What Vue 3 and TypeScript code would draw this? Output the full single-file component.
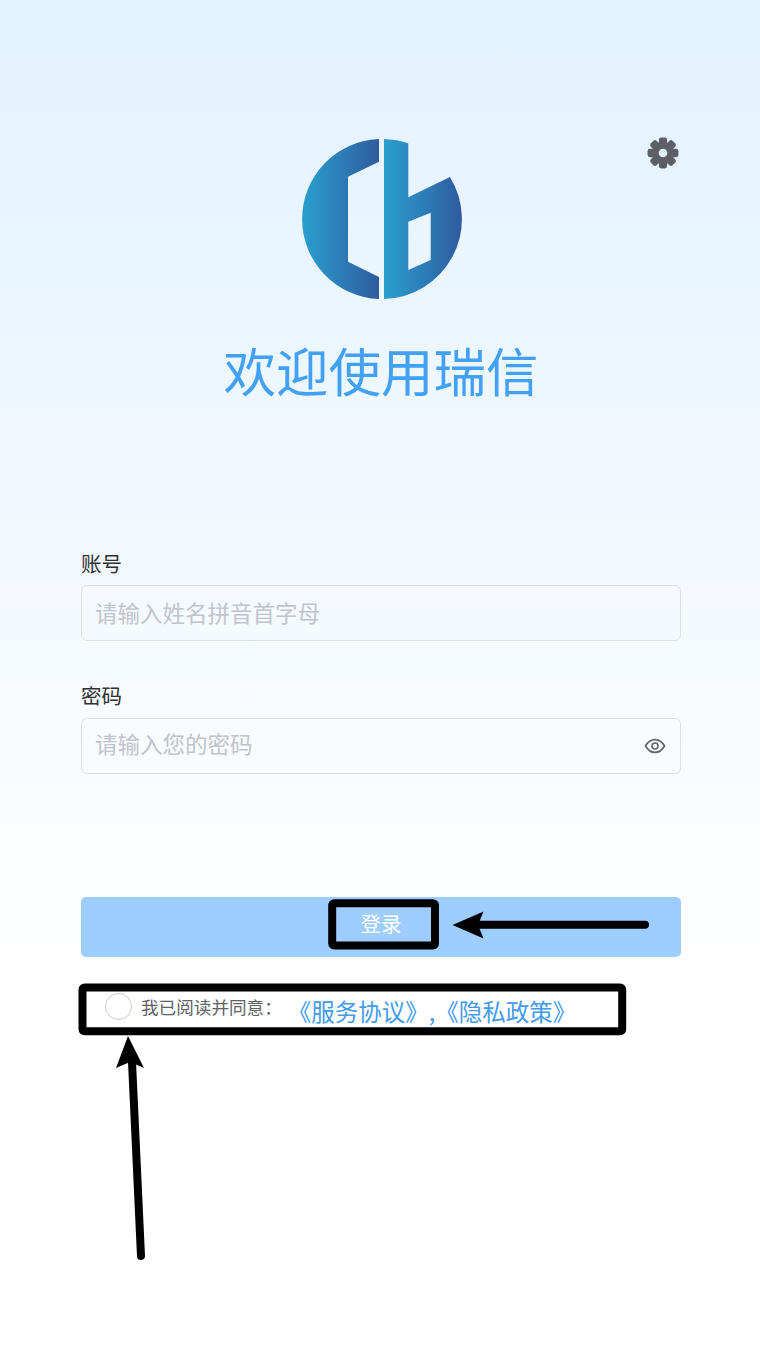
<script setup lang="ts">
const teeth: number[] = [0, 45, 90, 135, 180, 225, 270, 315]
</script>

<template>
  <div class="page">
    <header class="hero">
      <svg class="gear" viewBox="0 0 34 34" aria-label="设置">
        <g fill="#5c5f66">
          <rect v-for="t in teeth" :key="t" x="12.6" y="0.6" width="8.8" height="10" rx="2.6" :transform="`rotate(${t} 17 17)`" />
          <path fill-rule="evenodd" d="M17 5.5a11.5 11.5 0 1 0 0 23a11.5 11.5 0 1 0 0-23ZM17 12.4a4.6 4.6 0 1 1 0 9.2a4.6 4.6 0 1 1 0-9.2Z" />
        </g>
      </svg>
      <svg class="logo" viewBox="0 0 160 160" aria-label="logo">
        <defs>
          <linearGradient id="lg-l" gradientUnits="userSpaceOnUse" x1="0" y1="0" x2="77" y2="0">
            <stop offset="0" stop-color="#2a9fd0" />
            <stop offset="1" stop-color="#2f5b9f" />
          </linearGradient>
          <linearGradient id="lg-r" gradientUnits="userSpaceOnUse" x1="82" y1="0" x2="160" y2="0">
            <stop offset="0" stop-color="#2a9fd0" />
            <stop offset="1" stop-color="#2f5b9f" />
          </linearGradient>
        </defs>
        <path fill="url(#lg-l)" d="M77 0.06A80 80 0 0 0 77 159.94L77 138L46 122.7L46 37.7L77 22.7Z" />
        <path fill="url(#lg-r)" fill-rule="evenodd" d="M82 0.03A80 80 0 0 1 106.3 4.45L106.3 58.3L148 38A80 80 0 0 1 82 159.97ZM106.3 82.7L128.7 73.7L128.7 121L106.3 131Z" />
      </svg>
      <h1 class="title">欢迎使用瑞信</h1>
    </header>

    <form class="form" @submit.prevent>
      <label class="label">账号</label>
      <input class="field" type="text" placeholder="请输入姓名拼音首字母" />
      <label class="label second">密码</label>
      <div class="pw">
        <input class="field pw-field" type="password" placeholder="请输入您的密码" />
        <svg class="eye" viewBox="0 0 24 24" fill="none" stroke="#5f6266" stroke-width="1.6">
          <path d="M2.5 12C5 7.6 8.2 5.6 12 5.6S19 7.6 21.5 12C19 16.4 15.8 18.4 12 18.4S5 16.4 2.5 12Z" />
          <circle cx="12" cy="12" r="3" />
        </svg>
      </div>
      <button class="submit" type="submit"><span>登录</span></button>
    </form>

    <div class="agree">
      <span class="radio"></span>
      <span class="agree-text">我已阅读并同意：</span>
      <span class="links">《服务协议》,《隐私政策》</span>
    </div>

    <svg class="marks" viewBox="0 0 760 1355" aria-hidden="true">
      <rect x="332.2" y="903.2" width="102.8" height="42.3" rx="2" fill="none" stroke="#000" stroke-width="8" />
      <rect x="82.5" y="987.5" width="539.7" height="43.7" rx="2" fill="none" stroke="#000" stroke-width="8" />
      <path d="M480 924.8H645" stroke="#000" stroke-width="8" stroke-linecap="round" />
      <path d="M452.5 925L483.5 911.5L478 925L483.5 938.5Z" fill="#000" />
      <path d="M132 1062L141 1256" stroke="#000" stroke-width="8" stroke-linecap="round" />
      <path d="M128 1036L144 1068L130 1062L116 1068Z" fill="#000" />
    </svg>
  </div>
</template>

<style scoped>
.page {
  position: relative;
  width: 760px;
  height: 1355px;
  overflow: hidden;
  box-sizing: border-box;
  padding: 139px 79px 0 81px;
  background: linear-gradient(180deg, #e2f2ff 0%, #ffffff 72%);
  font-family: "Noto Sans CJK SC", "Noto Sans", sans-serif;
}
.hero {
  position: relative;
  display: flex;
  flex-direction: column;
  align-items: center;
}
.gear {
  position: absolute;
  top: -2px;
  right: 2px;
  width: 32px;
  height: 32px;
}
.logo {
  display: block;
  width: 160px;
  height: 160px;
  margin-left: 2px;
}
.title {
  margin: 40px 0 3px;
  font-size: 52.5px;
  line-height: 60px;
  font-weight: 400;
  color: #42a0f5;
}
.form {
  display: flex;
  flex-direction: column;
  margin-top: 148px;
}
.label {
  font-size: 20.5px;
  line-height: 26px;
  color: #303133;
  margin-bottom: 9px;
}
.second {
  margin-top: 41px;
  margin-bottom: 10px;
}
.field {
  display: block;
  width: 100%;
  height: 56px;
  box-sizing: border-box;
  padding: 0 14px 3px 13px;
  border: 1px solid #dcdfe6;
  border-radius: 6px;
  background: transparent;
  font-family: inherit;
  font-size: 22.5px;
  outline: none;
}
.pw-field {
  padding-bottom: 6px;
}
.field::placeholder {
  color: #c0c4cc;
  opacity: 1;
}
.pw {
  position: relative;
}
.eye {
  position: absolute;
  right: 14px;
  top: 16px;
  width: 24px;
  height: 24px;
}
.submit {
  height: 60px;
  margin-top: 123px;
  padding: 0 0 8px;
  border: none;
  border-radius: 5px;
  background: #9ecdff;
  color: #fff;
  font-family: inherit;
  font-size: 20.5px;
}
.agree {
  display: flex;
  align-items: center;
  height: 40px;
  margin-top: 35px;
  padding-left: 24px;
}
.radio {
  flex: none;
  width: 27px;
  height: 27px;
  box-sizing: border-box;
  border: 1px solid #c8c9cc;
  border-radius: 50%;
  background: #fff;
  margin-top: -11px;
  margin-right: 9px;
}
.agree-text {
  flex: none;
  font-size: 17.6px;
  color: #606266;
  margin-top: -11px;
  white-space: nowrap;
}
.links {
  flex: none;
  margin-left: 6px;
  margin-top: -2px;
  font-size: 23.5px;
  color: #439bea;
  white-space: nowrap;
}
.marks {
  position: absolute;
  left: 0;
  top: 0;
  width: 760px;
  height: 1355px;
  pointer-events: none;
}
</style>
